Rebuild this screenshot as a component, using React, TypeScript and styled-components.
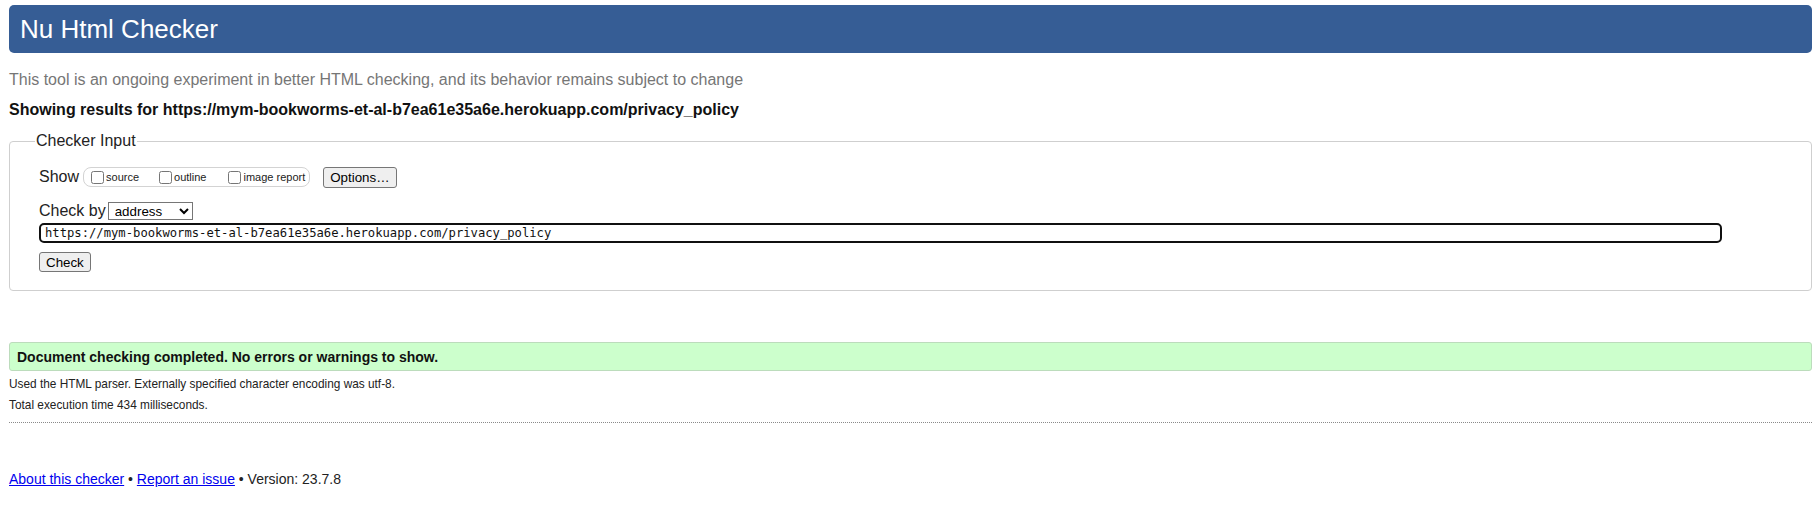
import React from "react";
import styled, { createGlobalStyle } from "styled-components";

const Global = createGlobalStyle`
  html, body { margin: 0; padding: 0; background: #fff; }
  body { font-family: Arial, "Liberation Sans", Helvetica, sans-serif; color: #000; }
`;

const Page = styled.div`
  padding: 5px 7px 0 9px;
`;

const Header = styled.h1`
  margin: 0;
  height: 48px;
  display: flex;
  align-items: center;
  padding: 0 11px;
  background: #365d95;
  color: #fff;
  border-radius: 5px;
  font-size: 26px;
  font-weight: normal;
`;

const Subtitle = styled.p`
  margin: 17px 0 0;
  font-size: 16px;
  line-height: 20px;
  color: #767676;
`;

const Results = styled.p`
  margin: 10px 0 0;
  font-size: 16px;
  line-height: 20px;
  font-weight: bold;
  color: #111;
`;

const Fieldset = styled.fieldset`
  margin: 11px 0 0;
  padding: 15px 0 18px 29px;
  border: 1px solid #cfcfcf;
  border-radius: 4px;
  min-width: 0;
`;

const Legend = styled.legend`
  padding: 0 1px;
  margin-left: -4px;
  font-size: 16px;
  line-height: 20px;
  color: #222;
`;

const Row = styled.div<{ $top?: number; $h?: number; $gap?: number }>`
  display: flex;
  align-items: center;
  gap: ${(p) => p.$gap ?? 4}px;
  margin-top: ${(p) => p.$top ?? 0}px;
  height: ${(p) => p.$h ?? 20}px;
  font-size: 16px;
  color: #222;
`;

const Group = styled.span`
  display: inline-flex;
  align-items: center;
  height: 18px;
  padding: 0 4px 0 7px;
  border: 1px solid #d3d3d3;
  border-radius: 8px;
`;

const Opt = styled.label<{ $gap?: number }>`
  display: inline-flex;
  align-items: center;
  font-size: 11px;
  color: #222;
  margin-right: ${(p) => p.$gap ?? 0}px;
`;

const Box = styled.input`
  margin: 0 2px 0 0;
  width: 13px;
  height: 13px;
`;

const Button = styled.button<{ $ml?: number }>`
  margin-left: ${(p) => p.$ml ?? 0}px;
  height: 21px;
  padding: 0 6px;
  font-family: Arial, "Liberation Sans", sans-serif;
  font-size: 13.33px;
  color: #000;
  background: #efefef;
  border: 1px solid #767676;
  border-radius: 3px;
`;

const Select = styled.select`
  height: 18px;
  width: 85px;
  font-family: Arial, "Liberation Sans", sans-serif;
  font-size: 13.33px;
  color: #000;
  background: #fff;
  border: 1px solid #767676;
  border-radius: 0;
  padding: 0 0 0 2px;
`;

const UrlInput = styled.input`
  display: block;
  box-sizing: border-box;
  margin-top: 2px;
  width: 1683px;
  height: 20px;
  padding: 0 4px;
  border: 2px solid #101010;
  border-radius: 5px;
  font-family: "DejaVu Sans Mono", "Liberation Mono", monospace;
  font-size: 12.2px;
  color: #111;
  outline: none;
`;

const CheckButton = styled(Button)`
  display: block;
  margin-top: 9px;
  height: 20px;
`;

const Success = styled.p`
  margin: 51px 0 0;
  height: 29px;
  box-sizing: border-box;
  display: flex;
  align-items: center;
  padding: 0 7px;
  background: #ccffcc;
  border: 1px solid #bcdcbc;
  border-radius: 3px;
  font-size: 14px;
  font-weight: bold;
  color: #111;
`;

const Detail = styled.p<{ $top: number }>`
  margin: ${(p) => p.$top}px 0 0;
  font-size: 11.85px;
  line-height: 16px;
  color: #222;
`;

const Divider = styled.hr`
  margin: 9px 0 0;
  border: 0;
  border-top: 1px dotted #8a8a8a;
  height: 0;
`;

const Footer = styled.p`
  margin: 47px 0 0;
  font-size: 14px;
  line-height: 18px;
  color: #222;
  a { color: #0000ee; }
`;

export default function App() {
  return (
    <>
      <Global />
      <Page>
        <Header>Nu Html Checker</Header>
        <Subtitle>
          This tool is an ongoing experiment in better HTML checking, and its behavior remains subject to change
        </Subtitle>
        <Results>Showing results for https://mym-bookworms-et-al-b7ea61e35a6e.herokuapp.com/privacy_policy</Results>
        <Fieldset>
          <Legend>Checker Input</Legend>
          <Row $h={22}>
            <span>Show</span>
            <Group>
              <Opt $gap={20}>
                <Box type="checkbox" />
                source
              </Opt>
              <Opt $gap={22}>
                <Box type="checkbox" />
                outline
              </Opt>
              <Opt>
                <Box type="checkbox" />
                image report
              </Opt>
            </Group>
            <Button $ml={9}>Options…</Button>
          </Row>
          <Row $top={13} $gap={2}>
            <span>Check by</span>
            <Select defaultValue="address">
              <option value="address">address</option>
              <option value="file">file upload</option>
              <option value="text">text input</option>
            </Select>
          </Row>
          <UrlInput defaultValue="https://mym-bookworms-et-al-b7ea61e35a6e.herokuapp.com/privacy_policy" />
          <CheckButton>Check</CheckButton>
        </Fieldset>
        <Success>Document checking completed. No errors or warnings to show.</Success>
        <Detail $top={5}>Used the HTML parser. Externally specified character encoding was utf-8.</Detail>
        <Detail $top={5}>Total execution time 434 milliseconds.</Detail>
        <Divider />
        <Footer>
          <a href="#about">About this checker</a> • <a href="#issue">Report an issue</a> • Version: 23.7.8
        </Footer>
      </Page>
    </>
  );
}
